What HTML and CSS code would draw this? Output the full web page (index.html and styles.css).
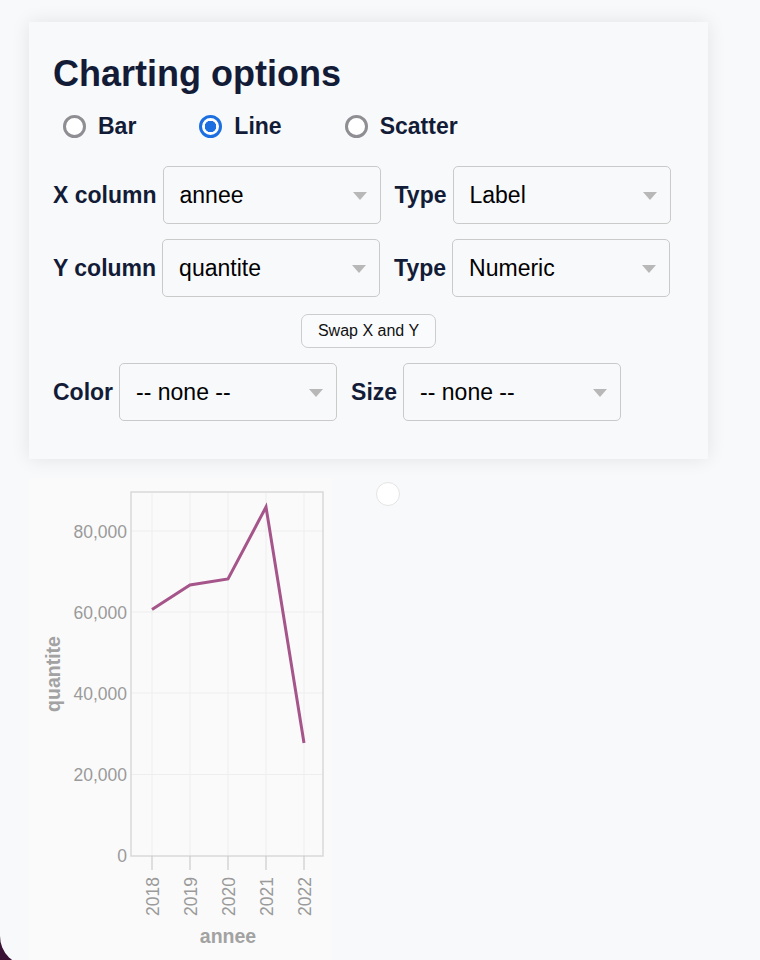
FILE: index.html
```html
<!DOCTYPE html>
<html lang="en">
<head>
<meta charset="utf-8">
<title>Charting options</title>
<link rel="stylesheet" href="styles.css">
</head>
<body>
<div class="page">
  <section class="panel">
    <h1 class="title">Charting options</h1>
    <div class="radios">
      <span class="radio"><span class="dot"></span><span class="radio-text">Bar</span></span>
      <span class="radio checked"><span class="dot"></span><span class="radio-text">Line</span></span>
      <span class="radio"><span class="dot"></span><span class="radio-text">Scatter</span></span>
    </div>
    <div class="row first">
      <span class="lbl">X column</span>
      <div class="select"><span>annee</span><svg class="caret" width="14" height="8" viewBox="0 0 14 8"><polygon points="0,0 14,0 7,8"/></svg></div>
      <span class="lbl second">Type</span>
      <div class="select"><span>Label</span><svg class="caret" width="14" height="8" viewBox="0 0 14 8"><polygon points="0,0 14,0 7,8"/></svg></div>
    </div>
    <div class="row">
      <span class="lbl">Y column</span>
      <div class="select"><span>quantite</span><svg class="caret" width="14" height="8" viewBox="0 0 14 8"><polygon points="0,0 14,0 7,8"/></svg></div>
      <span class="lbl second">Type</span>
      <div class="select"><span>Numeric</span><svg class="caret" width="14" height="8" viewBox="0 0 14 8"><polygon points="0,0 14,0 7,8"/></svg></div>
    </div>
    <div class="btn-row"><button class="swap" type="button">Swap X and Y</button></div>
    <div class="row">
      <span class="lbl">Color</span>
      <div class="select"><span>-- none --</span><svg class="caret" width="14" height="8" viewBox="0 0 14 8"><polygon points="0,0 14,0 7,8"/></svg></div>
      <span class="lbl second">Size</span>
      <div class="select"><span>-- none --</span><svg class="caret" width="14" height="8" viewBox="0 0 14 8"><polygon points="0,0 14,0 7,8"/></svg></div>
    </div>
  </section>

  <div class="lower">
    <div class="chart">
      <svg width="303" height="482" viewBox="0 0 303 482" class="chart-svg">
        <rect x="102" y="14" width="192" height="364" class="plot-bg"/>
        <g class="grid">
          <line x1="123" y1="14" x2="123" y2="378"/>
          <line x1="161" y1="14" x2="161" y2="378"/>
          <line x1="199" y1="14" x2="199" y2="378"/>
          <line x1="237" y1="14" x2="237" y2="378"/>
          <line x1="275" y1="14" x2="275" y2="378"/>
          <line x1="102" y1="53" x2="294" y2="53"/>
          <line x1="102" y1="134" x2="294" y2="134"/>
          <line x1="102" y1="215" x2="294" y2="215"/>
          <line x1="102" y1="296.5" x2="294" y2="296.5"/>
        </g>
        <rect x="102" y="14" width="192" height="364" class="plot-frame"/>
        <g class="ticks">
          <line x1="123" y1="378" x2="123" y2="392"/>
          <line x1="161" y1="378" x2="161" y2="392"/>
          <line x1="199" y1="378" x2="199" y2="392"/>
          <line x1="237" y1="378" x2="237" y2="392"/>
          <line x1="275" y1="378" x2="275" y2="392"/>
        </g>
        <g class="ylab">
          <text x="98" y="59.5">80,000</text>
          <text x="98" y="140.5">60,000</text>
          <text x="98" y="221.5">40,000</text>
          <text x="98" y="303">20,000</text>
          <text x="98" y="384">0</text>
        </g>
        <g class="xlab">
          <text transform="translate(129.5 399) rotate(-90)">2018</text>
          <text transform="translate(167.5 399) rotate(-90)">2019</text>
          <text transform="translate(205.5 399) rotate(-90)">2020</text>
          <text transform="translate(243.5 399) rotate(-90)">2021</text>
          <text transform="translate(281.5 399) rotate(-90)">2022</text>
        </g>
        <polyline class="series" points="123,131.5 161,107 199,101 237,29 275,265"/>
        <text class="axis-title" x="199" y="465">annee</text>
        <text class="axis-title" transform="translate(31 196) rotate(-90)">quantite</text>
      </svg>
    </div>
    <span class="spinner"></span>
  </div>
</div>
</body>
</html>
```

FILE: styles.css
```css
html {
  background: #3a1236;
}
body {
  margin: 0;
  height: 966px;
  overflow: hidden;
  background: #f8f9fb;
  border-bottom-left-radius: 30px;
  font-family: "Liberation Sans", Arial, Helvetica, sans-serif;
  color: #131c37;
}
.page {
  padding: 22px 0 0 29px;
}
.panel {
  width: 679px;
  box-sizing: border-box;
  padding: 30px 24px 38px;
  background: #f8f9fb;
  box-shadow: 0 0 18px rgba(0, 0, 0, 0.09);
}
.title {
  margin: 0;
  font-size: 36px;
  line-height: 43px;
  font-weight: 700;
  letter-spacing: 0;
}
.radios {
  display: flex;
  gap: 63px;
  margin-top: 17px;
  padding-left: 10px;
  height: 28px;
  align-items: center;
}
.radio {
  display: flex;
  align-items: center;
  gap: 12px;
  font-size: 23px;
  font-weight: 700;
  line-height: 28px;
}
.dot {
  width: 23px;
  height: 23px;
  box-sizing: border-box;
  border: 3px solid #8e8e93;
  border-radius: 50%;
  background: #fff;
  display: inline-block;
}
.radio.checked .dot {
  border-color: #1b6fe0;
  background: radial-gradient(circle, #1b6fe0 0 5.5px, #fff 6px);
}
.row {
  display: flex;
  align-items: center;
  margin-top: 15px;
  height: 58px;
}
.row.first {
  margin-top: 26px;
}
.lbl {
  font-size: 23px;
  font-weight: 700;
  margin-right: 6px;
  white-space: nowrap;
}
.lbl.second {
  margin-left: 14px;
}
.select {
  width: 218px;
  height: 58px;
  box-sizing: border-box;
  border: 1px solid #cacaca;
  border-radius: 5px;
  background: #f8f9fb;
  padding: 0 13px 0 16px;
  display: flex;
  align-items: center;
  justify-content: space-between;
  font-size: 23px;
  color: #000;
}
.caret {
  fill: #b8b8b8;
  margin-top: 2px;
}
.btn-row {
  display: flex;
  justify-content: center;
  margin-top: 17px;
}
.swap {
  height: 34px;
  padding: 0 16px;
  font-family: "Liberation Sans", Arial, sans-serif;
  font-size: 16px;
  color: #111;
  background: #fafbfc;
  border: 1px solid #cdcdcd;
  border-radius: 7px;
}
.lower {
  display: flex;
  align-items: flex-start;
  margin-top: 19px;
}
.chart {
  width: 303px;
  height: 482px;
  background: #fafafa;
}
.chart-svg {
  display: block;
  font-family: "Liberation Sans", Arial, sans-serif;
}
.plot-bg {
  fill: #fafafa;
}
.plot-frame {
  fill: none;
  stroke: #d9d9d9;
  stroke-width: 1.5;
}
.grid line {
  stroke: #eeeeee;
  stroke-width: 1;
}
.ticks line {
  stroke: #cccccc;
  stroke-width: 1.2;
}
.ylab text {
  font-size: 17.5px;
  fill: #9a9a9a;
  text-anchor: end;
}
.xlab text {
  font-size: 17.5px;
  fill: #9a9a9a;
  text-anchor: end;
}
.series {
  fill: none;
  stroke: #a5558a;
  stroke-width: 3;
  stroke-linejoin: miter;
}
.axis-title {
  font-size: 19.5px;
  font-weight: 700;
  fill: #a2a2a2;
  text-anchor: middle;
}
.spinner {
  width: 24px;
  height: 24px;
  box-sizing: border-box;
  margin: 4px 0 0 44px;
  border: 1px solid #e4e4e4;
  border-radius: 50%;
  background: #fff;
}
```
